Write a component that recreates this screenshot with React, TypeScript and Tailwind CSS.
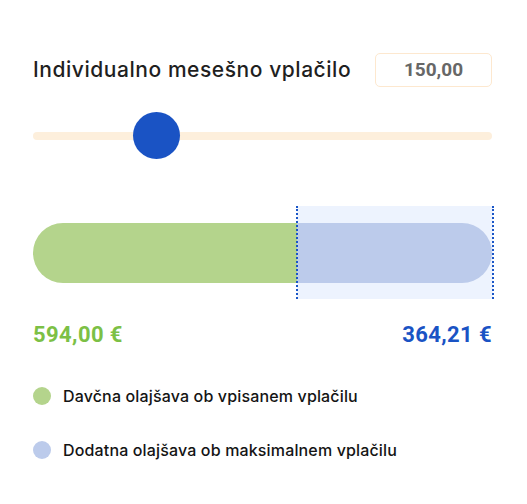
import React, { useState } from 'react';

const MIN = 0;
const MAX = 600;

const legendItems = [
  { color: 'bg-[#b4d48c]', label: 'Davčna olajšava ob vpisanem vplačilu' },
  { color: 'bg-[#bccbeb]', label: 'Dodatna olajšava ob maksimalnem vplačilu' },
];

export default function App() {
  const [value] = useState(145);
  // thumb travels across the track minus its own width
  const thumbLeft = ((value - MIN) / (MAX - MIN)) * (459 - 47);

  return (
    <div className="min-h-screen bg-white pl-[33px] pr-[35px] pt-[53px] font-['Inter','Liberation_Sans',sans-serif]">
      <div className="flex items-center justify-between">
        <h2 className="text-[21px] font-[450] leading-[34px] tracking-[0.55px] text-[#1f1f1f]">Individualno mesešno vplačilo</h2>
        <div className="flex h-[34px] w-[117px] items-center justify-center rounded-[5px] border border-[#fde8cf] font-['Roboto',sans-serif] text-[19px] font-bold text-[#676767]">
          150,00
        </div>
      </div>

      <div className="relative mt-[25px] flex h-[47px] items-center">
        <div className="h-[8px] w-full rounded-full bg-[#fdefdc]" />
        <div
          className="absolute top-0 h-[47px] w-[47px] rounded-full bg-[#1a53c4]"
          style={{ left: thumbLeft }}
        />
      </div>

      <div className="relative mt-[47px] flex h-[93px] items-center">
        <div className="absolute bottom-0 left-[264px] right-[-1px] top-0 bg-[#edf3fe]" />
        <div className="relative flex h-[60px] w-full">
          <div className="w-[264px] rounded-l-full bg-[#b4d48c]" />
          <div className="flex-1 rounded-r-full bg-[#bccbeb]" />
        </div>
        <div className="pointer-events-none absolute bottom-0 left-[263px] right-[-2px] top-0 border-x-2 border-dotted border-[#1a56c7]" />
      </div>

      <div className="mt-[23px] flex items-center justify-between font-['Roboto',sans-serif] text-[22px] font-bold leading-[25px] tracking-[0.4px]">
        <span className="text-[#7cc045]">594,00 €</span>
        <span className="text-[#1a53c4]">364,21 €</span>
      </div>

      <div className="mt-[40px] flex flex-col gap-[36px]">
        {legendItems.map((item) => (
          <div key={item.label} className="flex h-[18px] items-center gap-[12px]">
            <span className={`h-[18px] w-[18px] shrink-0 rounded-full ${item.color}`} />
            <span className="text-[16px] font-[450] tracking-[0.15px] text-[#141414]">{item.label}</span>
          </div>
        ))}
      </div>
    </div>
  );
}
